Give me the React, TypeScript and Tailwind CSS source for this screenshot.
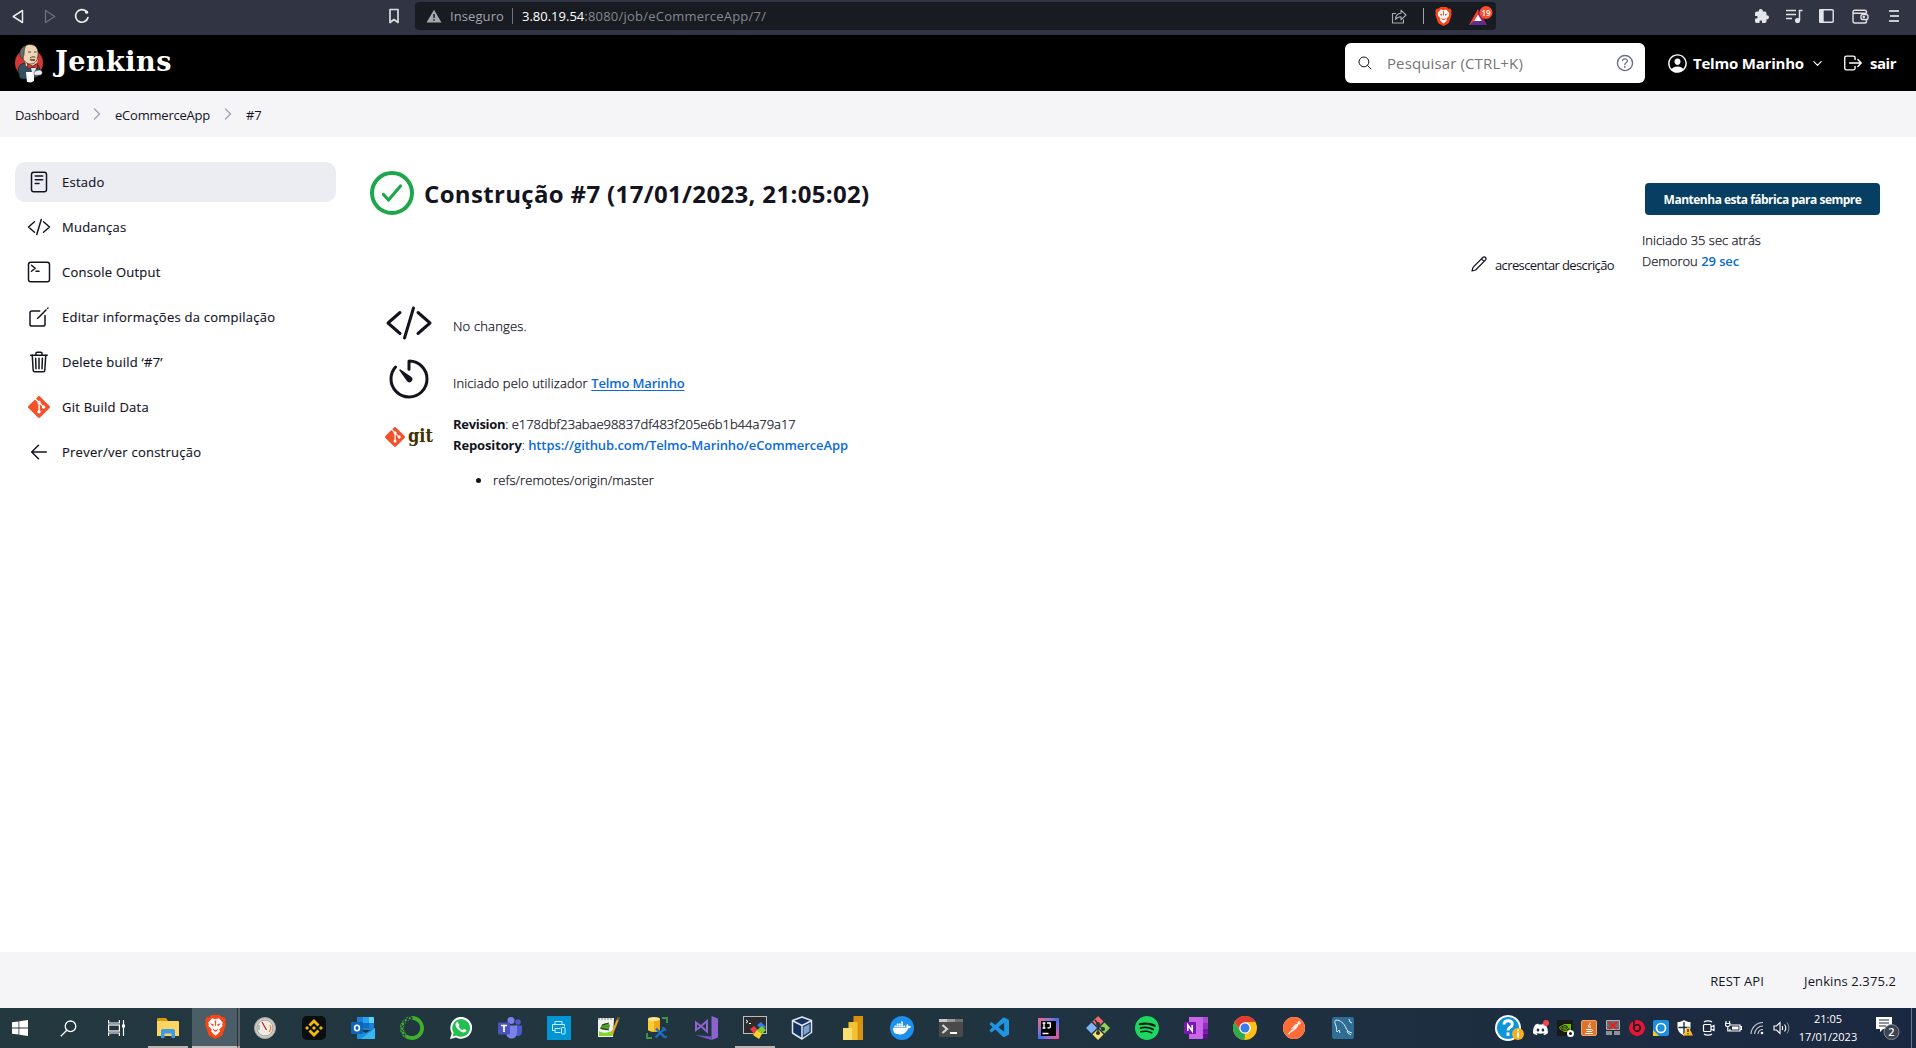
import type { ReactNode } from 'react';
import {
  IoArrowBackOutline,
  IoChevronDownOutline,
  IoChevronForwardOutline,
  IoCodeSlashOutline,
  IoCreateOutline,
  IoExtensionPuzzle,
  IoHelpCircleOutline,
  IoLogOutOutline,
  IoPersonCircleOutline,
  IoReaderOutline,
  IoSearchOutline,
  IoTerminalOutline,
  IoTimerOutline,
  IoTrashOutline,
} from 'react-icons/io5';
import {
  SiAnaconda,
  SiBeatsbydre,
  SiBinance,
  SiDiscord,
  SiDocker,
  SiGit,
  SiNvidia,
  SiPostman,
  SiSpotify,
} from 'react-icons/si';
import { VscVscode } from 'react-icons/vsc';

function BraveIcon({ className }: { className: string }) {
  return (
    <svg viewBox="0 0 21 24" className={className}>
      <path d="M6.500 0h8l2.300 2.300 2.200-.3L21 5l-.8 2 .6 2.500-3 9.500c-.3 1-1 1.700-1.800 2.200L10.500 24 5 21.200c-.8-.5-1.500-1.200-1.800-2.200L.2 9.500.8 7 0 5l2-3 2.200.3z" fill="#fb4516" />
      <path d="M10.500 4.200l3.500-.9 3.800 4.400-.6 1.800.4 1.500-3.300 3.500.6 1.800-1.700 2.200-2.700 2.200-2.700-2.200-1.700-2.200.6-1.800L3.400 11l.4-1.500-.6-1.800L7 3.300z" fill="#fff" />
      <path d="M5 8.300l3.800.9-.7 2.300zM16 8.300l-3.800.9.7 2.300zM9.700 5.500h1.600l-.4 5.500h-.8zM7.300 13.800l3.200 1.500 3.200-1.500-1.700 2.200-1.500.8-1.500-.8z" fill="#fb4516" />
    </svg>
  );
}

function JenkinsLogo() {
  return (
    <svg viewBox="0 0 30 40" className="h-10 w-[30px]">
      <circle cx="15" cy="20" r="14" fill="#d33833" />
      <path d="M6 22c3-2 5-2 8-2h6c4 1 6 4 6 8l-3 6-7 2H8c-2 0-3-3-3-5-1-4-1-7 1-9z" fill="#335061" stroke="#14202a" strokeWidth=".7" />
      <path d="M11 17l1 6 6 1 5-4 1-4z" fill="#f0d6b7" />
      <path d="M8 11C7 5 11 1.500 16 1.500c6 0 8.500 4.500 8 10-.3 5-2 9.500-7.500 9.500C11 21 8.500 16 8 11z" fill="#f0d6b7" stroke="#3b2a20" strokeWidth=".7" />
      <path d="M6.500 14C4.500 9 7 4 12 2.500 9.500 6 10.500 9 10 12l-1.500 4z" fill="#6d6b6d" stroke="#222" strokeWidth=".6" />
      <path d="M14 9h3M20 9h2.500M16 15c2-1.500 4-1.500 5.500-.5" stroke="#333" strokeWidth=".9" fill="none" />
      <path d="M15.500 16h5.500v2h-4z" fill="#81533f" />
      <path d="M13.500 20.500l5 2.500 5-2.500v5.500l-5-2-5 2z" fill="#d33833" stroke="#4b1212" strokeWidth=".6" />
      <path d="M17 25h5l-1 4h-3z" fill="#dfe5ea" />
      <path d="M12 29h8v9l-3 1.500-4-.5z" fill="#fff" />
      <path d="M20 29c2-1.500 5-2.500 7-1.500s1.500 4-.5 4.500-5 .5-6.500 0z" fill="#e9ecee" stroke="#2b2b2b" strokeWidth=".5" />
    </svg>
  );
}

function BrowserBar() {
  return (
    <div className="flex h-[35px] items-center bg-[#313442] pb-[3px] text-[13px] text-[#e4e5e9]">
      <svg viewBox="0 0 12 15" className="ml-3 h-[15px] w-3" fill="none" stroke="#e8e9ec" strokeWidth="1.500" strokeLinejoin="round">
        <path d="M10.500 1.500v12L1.200 7.500z" />
      </svg>
      <svg viewBox="0 0 12 15" className="ml-5 h-[15px] w-3" fill="none" stroke="#6f717c" strokeWidth="1.300" strokeLinejoin="round">
        <path d="M1.500 1.500v12l9.300-6z" />
      </svg>
      <svg viewBox="0 0 16 16" className="ml-[18px] h-4 w-4" fill="none" stroke="#eceded" strokeWidth="1.700" strokeLinecap="round">
        <path d="M14 9.500A6.300 6.300 0 1 1 12.300 3.400" />
        <circle cx="12.600" cy="4.200" r="1.600" fill="#eceded" stroke="none" />
      </svg>
      <svg viewBox="0 0 12 16" className="ml-[298px] h-4 w-3" fill="none" stroke="#dcdde0" strokeWidth="1.700" strokeLinejoin="round">
        <path d="M2 1.500h8v13l-4-3-4 3z" />
      </svg>
      <div className="ml-[15px] flex h-7 w-[1081px] items-center rounded-[4px] bg-[#181b22]">
        <svg viewBox="0 0 16 14" className="ml-[11px] h-[14px] w-4">
          <path d="M8 .8L15.500 13.500H.5z" fill="#a5a7ac" />
          <path d="M8 5v4M8 10.300v1.500" stroke="#181b22" strokeWidth="1.500" />
        </svg>
        <span className="ml-2 pt-0.5 tracking-[0.09px] text-[#a2a4a9]">Inseguro</span>
        <span className="ml-2 h-4 w-px bg-[#71747b]" />
        <span className="ml-[9px] pt-0.5 text-white">3.80.19.54</span>
        <span className="pt-0.5 tracking-[0.22px] text-[#85888e]">:8080/job/eCommerceApp/7/</span>
        <svg viewBox="0 0 16 16" className="ml-auto h-4 w-4" fill="none" stroke="#a9abb0" strokeWidth="1.100" strokeLinejoin="round">
          <path d="M5 5.500H1.500v9.500h11V11.500" />
          <path d="M4.500 11.500c.2-4 2-6 5.500-6.200V2.200l5 4.800-5 4.800V8.700c-2.500 0-4.200.8-5.500 2.800z" />
        </svg>
        <span className="ml-4 h-4 w-px bg-[#a0a2a7]" />
        <BraveIcon className="ml-[11px] h-[19px] w-[17px]" />
        <svg viewBox="0 0 26 22" className="mr-0.5 ml-4 h-[22px] w-[26px]">
          <path d="M10 4L1 20h5l4-7z" fill="#f4432a" />
          <path d="M10 4l9 16-4-2-5-6z" fill="#9e1f63" />
          <path d="M1 20h18l-4-4H6z" fill="#5c2d91" />
          <path d="M10 9.500l3.800 6.500H6.200z" fill="#fff" />
          <circle cx="18" cy="7.500" r="6.500" fill="#f8502f" />
          <text x="18" y="10.500" fontSize="8" fontWeight="600" textAnchor="middle" fill="#fff">19</text>
        </svg>
      </div>
      <IoExtensionPuzzle className="ml-[258px] h-4 w-4" />
      <svg viewBox="0 0 17 16" className="ml-4 h-4 w-[17px]" fill="none" stroke="#e4e5e9" strokeWidth="1.500">
        <path d="M0 2.500h10M0 6.500h10M0 10.500h6M16.500 2.500h-3v10" />
        <circle cx="11.500" cy="12.500" r="1.800" fill="#e4e5e9" />
      </svg>
      <svg viewBox="0 0 15 14" className="ml-4 h-[14px] w-[15px]" fill="none" stroke="#e4e5e9" strokeWidth="1.400">
        <rect x=".8" y=".8" width="13.400" height="12.400" rx="1" />
        <path d="M1 1h3v12H1z" fill="#e4e5e9" />
      </svg>
      <svg viewBox="0 0 17 15" className="ml-[18px] h-[15px] w-[17px]" fill="none" stroke="#dfe0e4" strokeWidth="1.400">
        <path d="M14.500 4.500V3c0-1-.8-1.800-1.800-1.800H2.800C1.700 1.200 1 2 1 3v9c0 1.200.7 2 1.800 2h9.900c1 0 1.800-.8 1.800-1.800V11M1.500 4.200h13" />
        <rect x="9" y="5.500" width="7" height="5" rx="1.800" />
        <circle cx="11.800" cy="8" r=".6" />
      </svg>
      <svg viewBox="0 0 10 14" className="ml-5 h-[14px] w-[10px]" stroke="#c9cad0" strokeWidth="1.800">
        <path d="M0 2h10M1 7h9M0 12h10" />
      </svg>
    </div>
  );
}

function Header() {
  return (
    <header className="flex h-14 items-center bg-black text-white">
      <div className="ml-[14px] pb-px">
        <JenkinsLogo />
      </div>
      <span className="ml-[11px] pb-[3px] font-['DejaVu_Serif',serif] text-[27px] leading-8 font-bold tracking-[0.5px]">
        Jenkins
      </span>
      <div className="ml-auto flex h-10 w-[300px] items-center rounded-[6px] bg-white pr-[9px] pl-3">
        <IoSearchOutline className="h-4 w-4 text-[#14141f]" />
        <span className="ml-[14px] text-[15px] tracking-[0.13px] text-[#757575]">Pesquisar (CTRL+K)</span>
        <IoHelpCircleOutline className="ml-auto h-[22px] w-[22px] text-[#6a6a8c]" />
      </div>
      <IoPersonCircleOutline className="ml-[21px] h-[23px] w-[23px]" />
      <span className="ml-1 text-[15px] font-bold tracking-[-0.2px]">Telmo Marinho</span>
      <IoChevronDownOutline className="ml-[7px] h-[13px] w-[13px]" />
      <IoLogOutOutline className="ml-[18px] h-[22px] w-[22px]" />
      <span className="mr-5 ml-1.5 text-[15px] font-bold tracking-[-0.47px]">sair</span>
    </header>
  );
}

function Breadcrumbs() {
  return (
    <nav className="flex h-[46px] items-center bg-[#f5f5f8] pl-[15px] text-[13px] text-[#14141f]">
      <span className="pt-[3px] tracking-[-0.34px]">Dashboard</span>
      <IoChevronForwardOutline className="ml-[9px] h-[18px] w-[18px] text-[#a5a5ba] [&_path]:[stroke-width:42px]" />
      <span className="ml-[9px] pt-[3px] tracking-[-0.22px]">eCommerceApp</span>
      <IoChevronForwardOutline className="ml-[9px] h-[18px] w-[18px] text-[#a5a5ba] [&_path]:[stroke-width:42px]" />
      <span className="ml-[9px] pt-[3px] tracking-[-0.2px]">#7</span>
    </nav>
  );
}

const tasks: { label: string; icon: ReactNode }[] = [
  { label: 'Estado', icon: <IoReaderOutline className="h-6 w-6" /> },
  { label: 'Mudanças', icon: <IoCodeSlashOutline className="h-6 w-6" /> },
  { label: 'Console Output', icon: <IoTerminalOutline className="h-6 w-6" /> },
  { label: 'Editar informações da compilação', icon: <IoCreateOutline className="h-6 w-6" /> },
  { label: 'Delete build ‘#7’', icon: <IoTrashOutline className="h-6 w-6" /> },
  { label: 'Git Build Data', icon: <SiGit className="mx-px h-[22px] w-[22px] text-[#f4502a]" /> },
  { label: 'Prever/ver construção', icon: <IoArrowBackOutline className="h-6 w-6 [&_path]:[stroke-width:32px]" /> },
];

function Sidebar() {
  return (
    <aside className="ml-[15px] flex w-[321px] flex-col gap-[5px] pt-[25px] text-[13px] text-[#14141f]">
      {tasks.map((task, i) => (
        <div
          key={task.label}
          className={`flex h-10 items-center gap-[11px] rounded-[10px] pl-3 tracking-[0.24px] [-webkit-text-stroke:0.15px] ${i === 0 ? 'bg-[#ecedf3]' : ''}`}
        >
          {task.icon}
          <span className="pt-px">{task.label}</span>
        </div>
      ))}
    </aside>
  );
}

function BuildSummary() {
  return (
    <section className="ml-[34px] flex w-[1244px] flex-col pt-[34px] text-[13px] text-[#14141f]">
      <div className="flex h-11 items-center">
        <svg viewBox="0 0 44 44" className="h-11 w-11" fill="none" stroke="#1ea64b" strokeWidth="4" strokeLinecap="round" strokeLinejoin="round">
          <circle cx="22" cy="22" r="20" />
          <path d="M13.500 23.500l5 5.500L30.500 15" strokeWidth="3.200" />
        </svg>
        <h1 className="ml-2.5 pt-px text-[24px] leading-8 font-bold tracking-[0.34px]">Construção #7 (17/01/2023, 21:05:02)</h1>
      </div>
      <div className="mt-[37px] flex h-6 items-center justify-end">
        <svg viewBox="0 0 16 16" className="h-4 w-4" fill="none" stroke="#14141f" strokeWidth="1.200" strokeLinejoin="round">
          <path d="M1 15l1-3.700L11.800 1.500c.8-.8 1.800-.8 2.600 0s.8 1.800 0 2.600L4.600 14zM10.500 2.800l2.600 2.600" />
        </svg>
        <span className="ml-2 w-[119px] pt-1 tracking-[-0.61px] whitespace-nowrap">acrescentar descrição</span>
      </div>
      <div className="mt-[23px] ml-[15px] flex h-12 items-center">
        <IoCodeSlashOutline className="h-12 w-12" />
        <span className="ml-5 pt-2 font-light tracking-[0.17px] [-webkit-text-stroke:0.25px]">No changes.</span>
      </div>
      <div className="mt-2 ml-[15px] flex h-12 items-center">
        <IoTimerOutline className="h-12 w-12" />
        <span className="ml-5 pt-2.5 font-light tracking-[0.13px] whitespace-pre [-webkit-text-stroke:0.25px]">Iniciado pelo utilizador </span>
        <a className="pt-2.5 font-semibold tracking-[-0.16px] text-[#0b6bd8] underline underline-offset-2">Telmo Marinho</a>
      </div>
      <div className="mt-[11px] ml-[15px] flex">
        <div className="flex h-[46px] w-12 items-center">
          <SiGit className="h-5 w-5 text-[#f4502a]" />
          <span className="ml-[3px] pb-[3px] font-['DejaVu_Serif_Condensed','DejaVu_Serif',serif] text-[18px] leading-5 font-bold text-[#413000]">git</span>
        </div>
        <div className="ml-5 flex flex-col leading-[21px] font-light">
          <div>
            <b className="font-bold tracking-[-0.3px]">Revision</b>
            <span className="tracking-[-0.03px] [-webkit-text-stroke:0.25px]">: e178dbf23abae98837df483f205e6b1b44a79a17</span>
          </div>
          <div>
            <b className="font-bold tracking-[-0.13px]">Repository</b>:{' '}
            <a className="font-semibold tracking-[-0.1px] text-[#0b6bd8]">https://github.com/Telmo-Marinho/eCommerceApp</a>
          </div>
          <div className="mt-[14px] ml-[23px] flex items-center">
            <span className="h-[5px] w-[5px] rounded-full bg-[#14141f]" />
            <span className="ml-3 tracking-[0.1px] [-webkit-text-stroke:0.25px]">refs/remotes/origin/master</span>
          </div>
        </div>
      </div>
    </section>
  );
}

function BuildInfo() {
  return (
    <aside className="ml-7 flex flex-col items-start pt-[46px] text-[13px] leading-[21px] text-[#14141f]">
      <button className="ml-[3px] flex h-8 w-[235px] items-center justify-center rounded-[4px] bg-[#073f62] text-[12px] font-bold tracking-[-0.5px] whitespace-nowrap text-white">
        Mantenha esta fábrica para sempre
      </button>
      <span className="mt-[15px] font-light [-webkit-text-stroke:0.25px]">Iniciado 35 sec atrás</span>
      <span className="font-light">
        <span className="[-webkit-text-stroke:0.25px]">Demorou</span>{' '}
        <a className="font-semibold tracking-[-0.1px] text-[#0b6bd8]">29 sec</a>
      </span>
    </aside>
  );
}

function TaskButton({ children, open = false }: { children: ReactNode; open?: boolean }) {
  return (
    <div className={`flex h-10 w-[49px] shrink-0 items-center justify-center ${open ? 'bg-[linear-gradient(#b9b4b2,#b9b4b2)] bg-[length:40px_2px] bg-bottom bg-no-repeat' : ''}`}>
      {children}
    </div>
  );
}

function TrayCell({ children }: { children: ReactNode }) {
  return <div className="flex w-6 shrink-0 items-center justify-center">{children}</div>;
}

function Taskbar() {
  return (
    <footer className="flex h-10 items-center bg-linear-to-r from-[#23383f] via-[#203440] to-[#1b2841] text-white">
      <div className="flex w-10 justify-center">
        <svg viewBox="0 0 16 16" className="h-4 w-4" fill="#fff">
          <path d="M0 2.300L6.500 1.400v6.200H0zM7.300 1.300L16 0v7.600H7.300zM0 8.400h6.500v6.200L0 13.700zM7.300 8.400H16V16l-8.700-1.300z" />
        </svg>
      </div>
      <div className="flex w-14 justify-center">
        <svg viewBox="0 0 17 17" className="h-[17px] w-[17px]" fill="none" stroke="#fff" strokeWidth="1.300">
          <circle cx="10.500" cy="6.300" r="5.300" />
          <path d="M6.800 10.200L.8 16.300" />
        </svg>
      </div>
      <div className="flex w-[47px] pl-3">
        <svg viewBox="0 0 17 16" className="h-4 w-[17px]" fill="none" stroke="#fff" strokeWidth="1.200">
          <path d="M.6 0v3h10.800V0M.6 16v-3h10.800v3M15.500 0v16" />
          <rect x=".6" y="5" width="10.800" height="6" />
          <path d="M14 4.500h3v3h-3z" fill="#fff" stroke="none" />
        </svg>
      </div>
      <TaskButton open>
        <svg viewBox="0 0 22 20" className="h-5 w-[22px]">
          <path d="M0 1.500C0 .6.500 0 1.300 0H9l2 3H0z" fill="#d99a12" />
          <path d="M0 3h20.500c1 0 1.500.5 1.500 1.500V18H0z" fill="#fcd462" />
          <path d="M4 20v-7c0-1.300.8-2 2-2h10c1.200 0 2 .7 2 2v7h-3.500v-4.500h-7V20z" fill="#3d9be6" />
        </svg>
      </TaskButton>
      <div className="flex h-10 w-[45px] items-center justify-center border-b-2 border-[#c9c0be] bg-[#4b5e67] pl-px">
        <BraveIcon className="h-6 w-[21px]" />
      </div>
      <div className="h-10 w-[3px] border-b-2 border-l border-b-[#a59f9e] border-l-[#26343a] bg-[#586268]" />
      <TaskButton>
        <svg viewBox="0 0 22 22" className="h-[22px] w-[22px]">
          <circle cx="11" cy="11" r="10.500" fill="#cfccc6" stroke="#a9a9a5" />
          <circle cx="11" cy="11" r="8" fill="#efece5" stroke="#a8a49c" strokeWidth="1" />
          <path d="M8 5l4.500 8" stroke="#c02a20" strokeWidth="1.300" />
          <path d="M16 8a6 6 0 0 1-1 7" stroke="#e0874a" strokeWidth="1.300" fill="none" />
          <path d="M5 8v5" stroke="#8d8d88" />
        </svg>
      </TaskButton>
      <TaskButton>
        <div className="flex h-6 w-6 items-center justify-center rounded-[5px] bg-[#0b0e11] text-[#f0b90b]">
          <SiBinance className="h-[18px] w-[18px]" />
        </div>
      </TaskButton>
      <TaskButton>
        <svg viewBox="0 0 24 22" className="h-[22px] w-6">
          <path d="M6 0h16c1 0 1 1 1 1v12H6z" fill="#1a80d8" />
          <path d="M12 0h6v6h-6z" fill="#2aa3ee" />
          <path d="M18 0h4l1 1v5h-5z" fill="#5fd2fa" />
          <path d="M12 6h6v5h-6z" fill="#0f6cc2" />
          <path d="M6 11l8.500 5L24 11v11H6z" fill="#1a90e3" />
          <path d="M24 11v11H10z" fill="#35b8f1" />
          <rect y="5" width="12" height="12" rx="1" fill="#0f64b8" />
          <ellipse cx="6" cy="11" rx="2.400" ry="2.800" fill="none" stroke="#fff" strokeWidth="1.600" />
        </svg>
      </TaskButton>
      <TaskButton><SiAnaconda className="h-6 w-6 text-[#3eb02a]" /></TaskButton>
      <TaskButton>
        <svg viewBox="0 0 22 22" className="h-[22px] w-[22px]">
          <path d="M0 22l1.700-5.800A10.900 10.900 0 1 1 6 20.400z" fill="#fff" />
          <path d="M2.500 19.500l1.100-3.800A8.900 8.900 0 1 1 6.400 18.500z" fill="#23c04f" />
          <path d="M8 5.800c-.4-.9-.8-.8-1.500-.4-1.700 1.500-1.200 4 1.500 6.900 3 3 5.600 4 7.500 2.500 1-.8.9-1.500.7-1.800l-2.200-1.100c-.5-.1-.9 1.100-1.500 1.200-1.500-.5-3.200-2-3.900-3.500 0-.5 1-1 .8-1.600z" fill="#fff" />
        </svg>
      </TaskButton>
      <TaskButton>
        <svg viewBox="0 0 24 22" className="h-[22px] w-6">
          <circle cx="20" cy="5" r="2.800" fill="#5059c9" />
          <circle cx="13" cy="3.500" r="3.500" fill="#7b83eb" />
          <path d="M17 8.500h7v6.500c0 3-2.500 4.500-5 4z" fill="#5059c9" />
          <path d="M8 8.500h11v7c0 4-2.500 6-5.500 6S8 19 8 15.500z" fill="#7b83eb" />
          <rect y="5.500" width="12" height="12" rx="1" fill="#4b53bc" />
          <path d="M3 8.500h6M6 8.500v6.500" stroke="#fff" strokeWidth="1.700" />
        </svg>
      </TaskButton>
      <TaskButton>
        <div className="flex h-6 w-6 items-center justify-center bg-[#0096d6]">
          <svg viewBox="0 0 14 14" className="h-[14px] w-[14px]" fill="none" stroke="#cdebf9" strokeWidth="1">
            <path d="M3 3.500v-3h7v3M8.500 11.500H3v-4h5.500M3 9.500H.5v-6h12v2" />
            <rect x="9.500" y="6.500" width="3.500" height="6.500" rx=".5" />
          </svg>
        </div>
      </TaskButton>
      <TaskButton>
        <svg viewBox="0 0 24 22" className="h-[22px] w-6">
          <path d="M2 1h16l-1 19H2z" fill="#f1f3ee" />
          <path d="M3 1v2M6 1v2M9 1v2M12 1v2M15 1v2" stroke="#888" />
          <path d="M3 14c5 3 9 2 14-1l-.5 6H3z" fill="#85d52f" />
          <path d="M5 9c2-3 6-4 9-1l-1 4c-3 2-6 1-8 0z" fill="#4f9a31" />
          <path d="M4 11l9 2M6 8l7-2" stroke="#233a1c" strokeWidth="1" />
          <path d="M22.500 1L16 17" stroke="#e8a51f" strokeWidth="2" />
          <path d="M23 0l-1 3" stroke="#7a4a2c" strokeWidth="2" />
        </svg>
      </TaskButton>
      <TaskButton>
        <svg viewBox="0 0 24 24" className="h-6 w-6">
          <path d="M3 3v11c2 2.500 10 2.500 12 0V3z" fill="#fbcb34" />
          <path d="M9 3v13c3 0 5-.7 6-2V3z" fill="#f0a91c" />
          <ellipse cx="9" cy="3" rx="6" ry="2" fill="#ffe48a" />
          <path d="M17 2h5v5M2 17v5h5" fill="none" stroke="#3c9a47" strokeWidth="1.800" />
          <path d="M10.500 21.500L20 12M11 12.500l9 9" stroke="#1a73c4" strokeWidth="2.200" />
          <path d="M18 11v3h3.500M20 22l2-2" stroke="#1a73c4" strokeWidth="1.500" fill="none" />
        </svg>
      </TaskButton>
      <TaskButton>
        <svg viewBox="0 0 24 24" className="h-6 w-6">
          <path d="M17.500 0L24 2.500v19L17.500 24z" fill="#8d63cf" />
          <path d="M1 19l16.500 1.500V24z" fill="#7c52c3" />
          <path d="M2 6.500v7.500l5-3.750zM7 10.200l6-5.200v10.500z" fill="none" stroke="#8d63cf" strokeWidth="2" />
        </svg>
      </TaskButton>
      <TaskButton open>
        <svg viewBox="0 0 24 24" className="h-6 w-6">
          <rect x=".5" y=".5" width="23" height="17" fill="#2c2c2e" stroke="#b9bdbf" />
          <path d="M3 4l2 1.500L3 7M6 7.500h2" stroke="#fff" fill="none" />
          <path d="M7 13l4-3 5 5-4 4z" fill="#ea3a3a" />
          <path d="M14 9l4-3 5 5-4 3z" fill="#2f7cf0" />
          <path d="M14 14l5-4 4 4-4 4z" fill="#7fd02b" />
          <path d="M10 19l4-5 5 4-3 5z" fill="#f8d12d" />
        </svg>
      </TaskButton>
      <TaskButton>
        <svg viewBox="0 0 22 24" className="mr-1 h-6 w-[22px]" strokeLinejoin="round">
          <path d="M11 1l9.500 3.500v12L11 23 1.500 17V4.500z" fill="#17315f" stroke="#dfe6f2" strokeWidth="1.500" />
          <path d="M2 5l9 4.500L20 5M11 9.500V22" stroke="#dfe6f2" strokeWidth="1.500" fill="none" />
          <path d="M12.500 11l6-3v7.500l-6 4z" fill="#7fa0ca" />
        </svg>
      </TaskButton>
      <TaskButton>
        <svg viewBox="0 0 20 24" className="h-6 w-5">
          <path d="M10.500 0H20v24h-9.500z" fill="#d8910f" />
          <path d="M5.500 6h9v18h-9z" fill="#f2c233" />
          <path d="M0 12h9v12H0z" fill="#fbdf70" />
        </svg>
      </TaskButton>
      <TaskButton>
        <div className="flex h-6 w-6 items-center justify-center rounded-full bg-[#1d90ed] text-white">
          <SiDocker className="h-[18px] w-[18px]" />
        </div>
      </TaskButton>
      <TaskButton>
        <svg viewBox="0 0 24 18" className="h-[18px] w-6">
          <rect width="24" height="18" rx="1" fill="#4a4a4a" />
          <path d="M0 0h8v3H0z" fill="#c9c9c9" />
          <path d="M8 0h8v3H8z" fill="#999" />
          <path d="M16 0h8v3h-8z" fill="#6f6f6f" />
          <path d="M3.500 6l4.500 4-4.500 4" stroke="#d2d2d2" strokeWidth="2.200" fill="none" />
          <path d="M11 14h7" stroke="#fff" strokeWidth="2" />
        </svg>
      </TaskButton>
      <TaskButton><VscVscode className="h-6 w-6 text-[#1f95e0]" /></TaskButton>
      <TaskButton>
        <div className="flex h-[21px] w-[21px] items-center justify-center bg-linear-to-br from-[#fc5b7b] via-[#3c6cf0] to-[#fb3c8e]">
          <svg viewBox="0 0 15 15" className="h-[15px] w-[15px] bg-black" fill="none" stroke="#fff" strokeWidth="1.300">
            <path d="M1.500 2h3M3 2v5M1.500 7h3M6 2h3.300v4c0 1-1.500 1.300-2.800.7M1.500 12.500h6" />
          </svg>
        </div>
      </TaskButton>
      <TaskButton>
        <svg viewBox="0 0 24 24" className="h-6 w-6">
          <path d="M12 0l5.500 5.500L12 11 6.500 5.500z" fill="#f0696a" />
          <path d="M5.500 6.500L11 12l-5.500 5.500L0 12z" fill="#7fb2f7" />
          <path d="M18.500 6.500L24 12l-5.500 5.500L13 12z" fill="#8fce5a" />
          <path d="M12 13l5.500 5.500L12 24l-5.500-5.500z" fill="#f8df68" />
          <path d="M9 4l3 4v9M12 9l5 4" stroke="#26353c" strokeWidth="1.500" fill="none" />
          <circle cx="12" cy="8" r="2" fill="#26353c" />
          <circle cx="12" cy="17" r="2" fill="#26353c" />
          <circle cx="17" cy="13" r="2" fill="#26353c" />
        </svg>
      </TaskButton>
      <TaskButton>
        <div className="h-6 w-6 rounded-full bg-[#0e1b16]">
          <SiSpotify className="h-6 w-6 text-[#1ed760]" />
        </div>
      </TaskButton>
      <TaskButton>
        <svg viewBox="0 0 24 22" className="h-[22px] w-6">
          <path d="M5 0h18c.6 0 1 .4 1 1v20c0 .6-.4 1-1 1H5z" fill="#ca64ea" />
          <path d="M19 0h4c.6 0 1 .4 1 1v5h-5z" fill="#ae4bd5" />
          <path d="M19 6h5v5.500h-5z" fill="#9332bf" />
          <path d="M19 11.500h5v5h-5z" fill="#7719aa" />
          <path d="M19 16.500h5V22h-5z" fill="#5c1189" />
          <rect y="5" width="12" height="12" rx="1" fill="#7719aa" />
          <path d="M3.800 14V8l4.400 6V8" fill="none" stroke="#fff" strokeWidth="1.600" />
        </svg>
      </TaskButton>
      <TaskButton>
        <svg viewBox="0 0 24 24" className="h-6 w-6">
          <circle cx="12" cy="12" r="12" fill="#fbc116" />
          <path d="M1.600 6A12 12 0 0 1 22.400 6H12L7 14.500z" fill="#e33b2e" />
          <path d="M1.600 6L7 15l5 3-.5 6A12 12 0 0 1 1.600 6z" fill="#2da94f" />
          <circle cx="12" cy="12" r="5.800" fill="#fff" />
          <circle cx="12" cy="12" r="4.500" fill="#3a7ced" />
        </svg>
      </TaskButton>
      <TaskButton>
        <div className="h-[22px] w-[22px] rounded-full bg-white">
          <SiPostman className="h-[22px] w-[22px] text-[#ff6c37]" />
        </div>
      </TaskButton>
      <TaskButton>
        <svg viewBox="0 0 22 22" className="h-[22px] w-[22px]" fill="none" stroke="#e6eef4" strokeWidth="1">
          <rect width="22" height="22" rx="2" fill="#2e6d94" stroke="none" />
          <path d="M5 15c-1-2 0-3-1-6S2 4 4 3c4 0 8 3 10 8 1 3 3 4 6 5M5 15l2-2 1 3M15 14l1 2 3 2M17 2l1 3 2 1" />
        </svg>
      </TaskButton>
      <div className="ml-auto flex w-[32px] justify-center">
        <svg viewBox="0 0 30 28" className="h-7 w-[30px]">
          <circle cx="14" cy="14" r="13" fill="#fff" />
          <circle cx="14" cy="14" r="11" fill="#0f96d8" />
          <path d="M10 10.500c.3-5 8.300-5 8.300-.3 0 3.300-4.300 3-4.300 6.300M14 18.500v3.200" fill="none" stroke="#fff" strokeWidth="3" />
          <circle cx="24" cy="20" r="6" fill="#f6b01e" />
          <path d="M24 18.500v5M24 15.500v1.800" stroke="#fff" strokeWidth="2" />
        </svg>
      </div>
      <div className="ml-1 flex">
        <TrayCell>
          <svg viewBox="0 0 18 18" className="h-[18px] w-[18px]">
            <g transform="translate(1 3) scale(.62)"><SiDiscord size={24} color="#fff" /></g>
            <circle cx="14" cy="4" r="3" fill="#f04747" />
          </svg>
        </TrayCell>
        <TrayCell>
          <div className="relative flex h-4 w-4 items-center justify-center bg-[#171a17]">
            <SiNvidia className="h-3 w-3 text-[#76b900]" />
            <span className="absolute -right-px -bottom-px h-[7px] w-[7px] rounded-full border-2 border-white bg-[#171a17]" />
          </div>
        </TrayCell>
        <TrayCell>
          <svg viewBox="0 0 16 16" className="h-4 w-4" fill="none" stroke="#fff" strokeWidth="1">
            <rect x=".5" y=".5" width="15" height="15" rx="1.500" fill="#e0732a" stroke="#f3a66b" />
            <path d="M9 2.500c1 1.500-2.500 2.500-1 5M10 5.500c-1 .5-1.500 1.500-.5 2.500M5 9.500h5.500c1.500 0 1.500 2-.5 2M5.500 11.500h4.500M4 13.500h8" />
          </svg>
        </TrayCell>
        <TrayCell>
          <svg viewBox="0 0 14 16" className="h-4 w-[14px]">
            <path d="M.5.500h13v9H.5z" fill="#6a6d70" stroke="#abadb0" />
            <path d="M3 2l8 7M11 2L3 9" stroke="#f01c1c" strokeWidth="1.700" />
            <path d="M0 11h6v4H0zM8 11h6v4H8z" fill="#8f9295" />
          </svg>
        </TrayCell>
        <TrayCell>
          <div className="h-4 w-4 rounded-full bg-[#26101c]"><SiBeatsbydre className="h-4 w-4 text-[#e01837]" /></div>
        </TrayCell>
        <TrayCell>
          <svg viewBox="0 0 16 16" className="h-4 w-4">
            <rect width="16" height="16" rx="2" fill="#1c8fe0" />
            <path d="M0 16V10l6 6z" fill="#f7c52e" />
            <circle cx="8" cy="8" r="4.500" fill="none" stroke="#fff" strokeWidth="1.700" />
          </svg>
        </TrayCell>
        <TrayCell>
          <svg viewBox="0 0 16 16" className="h-4 w-4">
            <path d="M7 0c2 1.500 4 2 6.500 2v5c0 4-3 7-6.500 8.500C3.500 14 .5 11 .5 7V2C3 2 5 1.500 7 0z" fill="#fff" />
            <path d="M7 2v12M1.500 7.500h11" stroke="#1d2b40" strokeWidth="1.400" />
            <path d="M11 6l5 9.500H6z" fill="#fbbf1e" />
            <path d="M11 9v3M11 13v1.300" stroke="#222" strokeWidth="1.200" />
          </svg>
        </TrayCell>
        <TrayCell>
          <svg viewBox="0 0 14 16" className="h-4 w-[14px]" fill="none" stroke="#fff" strokeWidth="1.200">
            <rect x="1.500" y="4.500" width="7.500" height="7" rx="1" />
            <path d="M9 7l3-1.500v5L9 9M2 2c2-1.500 6-1.500 8 0M2 14c2 1.500 6 1.500 8 0" />
          </svg>
        </TrayCell>
        <TrayCell>
          <svg viewBox="0 0 17 14" className="h-[14px] w-[17px]" fill="none" stroke="#fff" strokeWidth="1.200">
            <path d="M6 4h9v6H5V8M15.500 5.500h1v3h-1M1 0v2M4.500 0v2M.5 2.500h4.500v2L2.800 6 .5 4.500zM2.800 6v4H5" />
            <path d="M7 5.500h6.500v3H7z" fill="#fff" stroke="none" />
          </svg>
        </TrayCell>
        <TrayCell>
          <svg viewBox="0 0 14 14" className="h-[14px] w-[14px]" fill="none" stroke="#c9ced6" strokeWidth="1.100">
            <path d="M1 13A12 12 0 0 1 13 1.500M4.500 13A8.500 8.500 0 0 1 13 5M8 13a5 5 0 0 1 5-4.500" />
            <circle cx="12" cy="12" r="1.300" fill="#fff" stroke="none" />
          </svg>
        </TrayCell>
        <TrayCell>
          <svg viewBox="0 0 17 14" className="h-[14px] w-[17px]" fill="none" stroke="#fff" strokeWidth="1.100">
            <path d="M1 5h2.500L7 1.500v11L3.500 9H1zM9 5c.8 1.200.8 2.800 0 4M11.500 3.500c1.500 2 1.500 5 0 7" />
            <path d="M14 1.500c2.500 3 2.500 8 0 11" stroke="#7f8a99" />
          </svg>
        </TrayCell>
      </div>
      <div className="flex w-[70px] flex-col items-center text-[11px] leading-[18px]">
        <span>21:05</span>
        <span>17/01/2023</span>
      </div>
      <div className="flex w-[47px] justify-center pl-0.5">
        <svg viewBox="0 0 24 24" className="h-6 w-6">
          <path d="M0 1h16v12H7l-3 3v-3H0z" fill="#fff" />
          <path d="M3 4h10M3 7h10M3 10h7" stroke="#1c2a40" />
          <circle cx="15.500" cy="16" r="7.500" fill="#3b444f" stroke="#9aa1aa" strokeWidth=".8" />
          <text x="15.500" y="20" fontSize="11" fontWeight="600" textAnchor="middle" fill="#fff">2</text>
        </svg>
      </div>
      <div className="mr-1 ml-px h-10 w-px bg-[#6d7688]" />
    </footer>
  );
}

export default function App() {
  return (
    <div className="flex h-[1048px] w-[1916px] flex-col overflow-hidden bg-white font-['Open_Sans','Noto_Sans',sans-serif]">
      <BrowserBar />
      <Header />
      <Breadcrumbs />
      <main className="flex flex-1">
        <Sidebar />
        <BuildSummary />
        <BuildInfo />
      </main>
      <div className="flex h-14 items-center justify-end gap-10 bg-[#f5f5f8] pr-5 text-[13px] text-[#14141f]">
        <span className="pt-[3px] tracking-[0.17px]">REST API</span>
        <span className="pt-[3px] tracking-[0.1px]">Jenkins 2.375.2</span>
      </div>
      <Taskbar />
    </div>
  );
}
